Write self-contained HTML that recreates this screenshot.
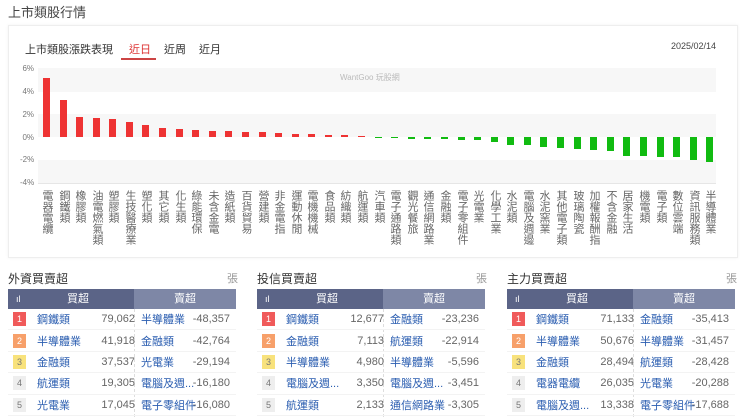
<!DOCTYPE html>
<html><head><meta charset="utf-8"><style>
*{margin:0;padding:0;box-sizing:border-box}
body{width:740px;height:416px;overflow:hidden;background:#fff;font-family:"Liberation Sans","Noto Sans CJK TC",sans-serif;position:relative;color:#333}
.a{position:absolute}
.card{left:8px;top:25px;width:730px;height:233px;border:1px solid #eee;box-shadow:0 0 3px rgba(0,0,0,.06)}
.band{position:absolute;left:38px;width:678px;background:#f7f7f7}
.yl{position:absolute;left:20px;font-size:8px;color:#777;width:14px;text-align:right}
.b{position:absolute;width:7px}
.r{background:#ee3333}.g{background:#11bb11}
.lb{position:absolute;top:190px;writing-mode:vertical-rl;font-size:11px;line-height:11px;color:#666;width:11px}
.t{position:absolute;top:289px;width:228px;font-size:11px}
.hd{height:20px;display:flex;color:#fff;font-size:11px;line-height:20px}
.hd .l{width:126px;background:#5b6487;position:relative;text-align:center;padding-left:14px}
.hd .rr{flex:1;background:#7e87a6;text-align:center}
.row{height:21.4px;display:flex;align-items:center;border-bottom:1px solid #f3f3f3;position:relative}
.rk{width:13px;height:14px;margin-left:5px;font-size:9px;line-height:14px;text-align:center;color:#fff}
.n1{position:absolute;left:29px;color:#2a5db0}
.v1{position:absolute;right:101px;color:#666}
.n2{position:absolute;left:133px;color:#2a5db0}
.v2{position:absolute;right:6px;color:#666}
.sep{position:absolute;left:126px;top:20px;height:108px;border-left:1px dashed #ddd}
.tt{position:absolute;top:270px;font-size:12px;color:#333}
.zh{position:absolute;top:270px;font-size:11px;color:#999}
</style></head><body>
<div class="a" style="left:8px;top:2px;font-size:13px;color:#444">上市類股行情</div>
<div class="a card"></div>
<div class="a" style="left:25px;top:41px;font-size:11px;color:#333">上市類股漲跌表現</div>
<div class="a" style="left:129px;top:41px;font-size:11px;color:#d33">近日</div>
<div class="a" style="left:121px;top:58px;width:35px;height:2px;background:#c44"></div>
<div class="a" style="left:164px;top:41px;font-size:11px;color:#333">近周</div>
<div class="a" style="left:199px;top:41px;font-size:11px;color:#333">近月</div>
<div class="a" style="left:671px;top:41px;font-size:9px;color:#444">2025/02/14</div>
<div class="band" style="top:68px;height:24px"></div>
<div class="band" style="top:114px;height:23px"></div>
<div class="band" style="top:160px;height:23px"></div>
<div class="a" style="left:38px;top:183px;width:678px;height:1px;background:#e6e6e6"></div>
<div class="a" style="left:340px;top:72px;font-size:8px;color:#bbb">WantGoo 玩股網</div>
<div class="yl" style="top:64px">6%</div><div class="yl" style="top:87px">4%</div><div class="yl" style="top:110px">2%</div><div class="yl" style="top:133px">0%</div><div class="yl" style="top:155px">-2%</div><div class="yl" style="top:178px">-4%</div>
<div class="b r" style="left:43px;top:78px;height:59px"></div>
<div class="b r" style="left:60px;top:100px;height:37px"></div>
<div class="b r" style="left:76px;top:117px;height:20px"></div>
<div class="b r" style="left:93px;top:118px;height:19px"></div>
<div class="b r" style="left:109px;top:119px;height:18px"></div>
<div class="b r" style="left:126px;top:122px;height:15px"></div>
<div class="b r" style="left:142px;top:125px;height:12px"></div>
<div class="b r" style="left:159px;top:128px;height:9px"></div>
<div class="b r" style="left:176px;top:129px;height:8px"></div>
<div class="b r" style="left:192px;top:130px;height:7px"></div>
<div class="b r" style="left:209px;top:131px;height:6px"></div>
<div class="b r" style="left:225px;top:131px;height:6px"></div>
<div class="b r" style="left:242px;top:132px;height:5px"></div>
<div class="b r" style="left:259px;top:132px;height:5px"></div>
<div class="b r" style="left:275px;top:133px;height:4px"></div>
<div class="b r" style="left:292px;top:134px;height:3px"></div>
<div class="b r" style="left:308px;top:134px;height:3px"></div>
<div class="b r" style="left:325px;top:135px;height:2px"></div>
<div class="b r" style="left:341px;top:135px;height:2px"></div>
<div class="b r" style="left:358px;top:136px;height:1px"></div>
<div class="b g" style="left:375px;top:137px;height:1px"></div>
<div class="b g" style="left:391px;top:137px;height:1px"></div>
<div class="b g" style="left:408px;top:137px;height:2px"></div>
<div class="b g" style="left:424px;top:137px;height:2px"></div>
<div class="b g" style="left:441px;top:137px;height:2px"></div>
<div class="b g" style="left:458px;top:137px;height:3px"></div>
<div class="b g" style="left:474px;top:137px;height:3px"></div>
<div class="b g" style="left:491px;top:137px;height:5px"></div>
<div class="b g" style="left:507px;top:137px;height:8px"></div>
<div class="b g" style="left:524px;top:137px;height:8px"></div>
<div class="b g" style="left:540px;top:137px;height:10px"></div>
<div class="b g" style="left:557px;top:137px;height:11px"></div>
<div class="b g" style="left:574px;top:137px;height:12px"></div>
<div class="b g" style="left:590px;top:137px;height:13px"></div>
<div class="b g" style="left:607px;top:137px;height:14px"></div>
<div class="b g" style="left:623px;top:137px;height:19px"></div>
<div class="b g" style="left:640px;top:137px;height:19px"></div>
<div class="b g" style="left:657px;top:137px;height:20px"></div>
<div class="b g" style="left:673px;top:137px;height:20px"></div>
<div class="b g" style="left:690px;top:137px;height:23px"></div>
<div class="b g" style="left:706px;top:137px;height:25px"></div>
<div class="lb" style="left:41px">電器電纜</div>
<div class="lb" style="left:58px">鋼鐵類</div>
<div class="lb" style="left:74px">橡膠類</div>
<div class="lb" style="left:91px">油電燃氣類</div>
<div class="lb" style="left:107px">塑膠類</div>
<div class="lb" style="left:124px">生技醫療業</div>
<div class="lb" style="left:140px">塑化類</div>
<div class="lb" style="left:157px">其它類</div>
<div class="lb" style="left:174px">化生類</div>
<div class="lb" style="left:190px">綠能環保</div>
<div class="lb" style="left:207px">未含金電</div>
<div class="lb" style="left:223px">造紙類</div>
<div class="lb" style="left:240px">百貨貿易</div>
<div class="lb" style="left:257px">營建類</div>
<div class="lb" style="left:273px">非金電指</div>
<div class="lb" style="left:290px">運動休閒</div>
<div class="lb" style="left:306px">電機機械</div>
<div class="lb" style="left:323px">食品類</div>
<div class="lb" style="left:339px">紡織類</div>
<div class="lb" style="left:356px">航運類</div>
<div class="lb" style="left:373px">汽車類</div>
<div class="lb" style="left:389px">電子通路類</div>
<div class="lb" style="left:406px">觀光餐旅</div>
<div class="lb" style="left:422px">通信網路業</div>
<div class="lb" style="left:439px">金融類</div>
<div class="lb" style="left:456px">電子零組件</div>
<div class="lb" style="left:472px">光電業</div>
<div class="lb" style="left:489px">化學工業</div>
<div class="lb" style="left:505px">水泥類</div>
<div class="lb" style="left:522px">電腦及週邊</div>
<div class="lb" style="left:538px">水泥窯業</div>
<div class="lb" style="left:555px">其他電子類</div>
<div class="lb" style="left:572px">玻璃陶瓷</div>
<div class="lb" style="left:588px">加權報酬指</div>
<div class="lb" style="left:605px">不含金融</div>
<div class="lb" style="left:621px">居家生活</div>
<div class="lb" style="left:638px">機電類</div>
<div class="lb" style="left:655px">電子類</div>
<div class="lb" style="left:671px">數位雲端</div>
<div class="lb" style="left:688px">資訊服務類</div>
<div class="lb" style="left:704px">半導體業</div>

<div class="tt" style="left:8px">外資買賣超</div><div class="zh" style="left:227px">張</div>
<div class="t" style="left:8px">
<div class="hd"><div class="l"><span style="position:absolute;left:8px;font-size:9px">ıl</span>買超</div><div class="rr">賣超</div></div>
<div class="sep"></div>
<div class="row"><div class="rk" style="background:#f05a5a">1</div><span class="n1">鋼鐵類</span><span class="v1">79,062</span><span class="n2">半導體業</span><span class="v2">-48,357</span></div>
<div class="row"><div class="rk" style="background:#f7a06a">2</div><span class="n1">半導體業</span><span class="v1">41,918</span><span class="n2">金融類</span><span class="v2">-42,764</span></div>
<div class="row"><div class="rk" style="background:#f8e27c;color:#777">3</div><span class="n1">金融類</span><span class="v1">37,537</span><span class="n2">光電業</span><span class="v2">-29,194</span></div>
<div class="row"><div class="rk" style="background:#eee;color:#777">4</div><span class="n1">航運類</span><span class="v1">19,305</span><span class="n2">電腦及週...</span><span class="v2">-16,180</span></div>
<div class="row"><div class="rk" style="background:#eee;color:#777">5</div><span class="n1">光電業</span><span class="v1">17,045</span><span class="n2">電子零組件</span><span class="v2">-16,080</span></div>
</div>

<div class="tt" style="left:257px">投信買賣超</div><div class="zh" style="left:476px">張</div>
<div class="t" style="left:257px">
<div class="hd"><div class="l"><span style="position:absolute;left:8px;font-size:9px">ıl</span>買超</div><div class="rr">賣超</div></div>
<div class="sep"></div>
<div class="row"><div class="rk" style="background:#f05a5a">1</div><span class="n1">鋼鐵類</span><span class="v1">12,677</span><span class="n2">金融類</span><span class="v2">-23,236</span></div>
<div class="row"><div class="rk" style="background:#f7a06a">2</div><span class="n1">金融類</span><span class="v1">7,113</span><span class="n2">航運類</span><span class="v2">-22,914</span></div>
<div class="row"><div class="rk" style="background:#f8e27c;color:#777">3</div><span class="n1">半導體業</span><span class="v1">4,980</span><span class="n2">半導體業</span><span class="v2">-5,596</span></div>
<div class="row"><div class="rk" style="background:#eee;color:#777">4</div><span class="n1">電腦及週...</span><span class="v1">3,350</span><span class="n2">電腦及週...</span><span class="v2">-3,451</span></div>
<div class="row"><div class="rk" style="background:#eee;color:#777">5</div><span class="n1">航運類</span><span class="v1">2,133</span><span class="n2">通信網路業</span><span class="v2">-3,305</span></div>
</div>

<div class="tt" style="left:507px">主力買賣超</div><div class="zh" style="left:726px">張</div>
<div class="t" style="left:507px">
<div class="hd"><div class="l"><span style="position:absolute;left:8px;font-size:9px">ıl</span>買超</div><div class="rr">賣超</div></div>
<div class="sep"></div>
<div class="row"><div class="rk" style="background:#f05a5a">1</div><span class="n1">鋼鐵類</span><span class="v1">71,133</span><span class="n2">金融類</span><span class="v2">-35,413</span></div>
<div class="row"><div class="rk" style="background:#f7a06a">2</div><span class="n1">半導體業</span><span class="v1">50,676</span><span class="n2">半導體業</span><span class="v2">-31,457</span></div>
<div class="row"><div class="rk" style="background:#f8e27c;color:#777">3</div><span class="n1">金融類</span><span class="v1">28,494</span><span class="n2">航運類</span><span class="v2">-28,428</span></div>
<div class="row"><div class="rk" style="background:#eee;color:#777">4</div><span class="n1">電器電纜</span><span class="v1">26,035</span><span class="n2">光電業</span><span class="v2">-20,288</span></div>
<div class="row"><div class="rk" style="background:#eee;color:#777">5</div><span class="n1">電腦及週...</span><span class="v1">13,338</span><span class="n2">電子零組件</span><span class="v2">-17,688</span></div>
</div>
</body></html>
